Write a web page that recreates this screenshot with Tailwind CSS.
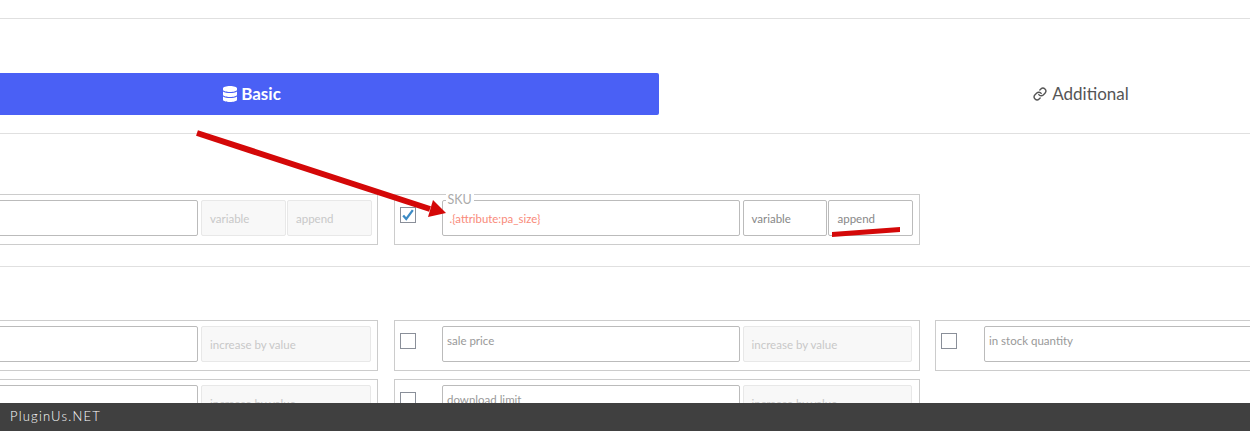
<!DOCTYPE html>
<html lang="en">
<head>
  <meta charset="UTF-8">
  <meta name="viewport" content="width=device-width, initial-scale=1.0">
  <title>Bulk editor</title>
  <script src="https://cdn.jsdelivr.net/npm/@tailwindcss/browser@4"></script>
</head>
<body class="bg-white">
  <div class="relative w-[1250px] h-[431px] overflow-hidden font-['Lato','Liberation_Sans',sans-serif]">
    <div class="pt-[18px]">
      <div class="border-t border-[#e0e0e0] pt-[54px]">
        <!-- tabs -->
        <div class="flex ml-[-155px] w-[1658px] h-[42px] items-center">
          <div class="w-[814px] shrink-0 h-full flex items-center justify-center gap-[4px] bg-[#4a60f5] rounded-r-[2px] text-white text-[17px] font-bold">
            <svg class="w-[14px] h-[16px]" viewBox="0 0 448 512" fill="currentColor"><path d="M448 73.143v45.714C448 159.143 347.667 192 224 192S0 159.143 0 118.857V73.143C0 32.857 100.333 0 224 0s224 32.857 224 73.143zM448 176v102.857C448 319.143 347.667 352 224 352S0 319.143 0 278.857V176c48.125 33.143 136.208 48.572 224 48.572S399.874 209.143 448 176zm0 160v102.857C448 479.143 347.667 512 224 512S0 479.143 0 438.857V336c48.125 33.143 136.208 48.572 224 48.572S399.874 369.143 448 336z"/></svg>
            <span>Basic</span>
          </div>
          <div class="w-[844px] shrink-0 h-full flex items-center justify-center gap-[5px] text-[#555] text-[17px]">
            <svg class="w-[14px] h-[14px]" viewBox="0 0 24 24" fill="none" stroke="currentColor" stroke-width="2.4" stroke-linecap="round" stroke-linejoin="round"><path d="M10 13a5 5 0 0 0 7.54.54l3-3a5 5 0 0 0-7.07-7.07l-1.72 1.71"/><path d="M14 11a5 5 0 0 0-7.54-.54l-3 3a5 5 0 0 0 7.07 7.07l1.71-1.71"/></svg>
            <span>Additional</span>
          </div>
        </div>

        <!-- first section -->
        <div class="mt-[18px] border-t border-[#e0e0e0] pt-[60px] pb-[21px]">
          <div class="ml-[-147px] grid grid-cols-[525px_526px_526px] gap-x-[15.5px]">
            <div class="h-[51px] border border-[#ccc] pt-[5px] pl-[6px] pr-[5px] flex gap-[3px]">
              <div class="flex-1 h-[36px] border border-[#bbb] rounded-[2px]"></div>
              <div class="w-[85px] h-[36px] border border-[#e8e8e8] bg-[#f8f8f8] rounded-[2px] pl-[8px] pt-[1px] flex items-center text-[11.5px] text-[#c8c8c8]">variable</div>
              <div class="w-[85px] h-[36px] -ml-[2px] border border-[#e8e8e8] bg-[#f8f8f8] rounded-[2px] pl-[8px] pt-[1px] flex items-center text-[11.5px] text-[#c8c8c8]">append</div>
            </div>
            <div class="h-[51px] border border-[#ccc] pt-[5px] pr-[6px] flex">
              <div class="w-[16px] h-[16px] ml-[5px] mt-[7px] border border-[#8a8f99] flex items-center justify-center">
                <svg class="w-[14px] h-[14px]" viewBox="0 0 16 16" fill="none" stroke="#3b8ac4" stroke-width="2.6"><path d="M2.5 8.5l3.5 4L13.5 2.5"/></svg>
              </div>
              <div class="relative w-[298px] h-[36px] ml-[26px] border border-[#bbb] rounded-[2px] pl-[7px] pt-[11px] text-[11.4px] leading-[14px] text-[#f98a7a]">
                <span class="absolute left-[3px] top-[-9px] bg-white px-[2px] text-[12.5px] leading-[16px] text-[#aaa]">SKU</span>
                .{attribute:pa_size}
              </div>
              <div class="w-[84px] h-[36px] ml-[3px] border border-[#bbb] rounded-[2px] pl-[8px] pt-[1px] flex items-center text-[11.5px] text-[#888]">variable</div>
              <div class="w-[85px] h-[36px] ml-[1px] border border-[#bbb] rounded-[2px] pl-[9px] pt-[1px] flex items-center text-[11.5px] text-[#888]">append</div>
            </div>
          </div>
        </div>

        <!-- second section -->
        <div class="border-t border-[#e0e0e0] pt-[53px]">
          <div class="ml-[-147px] grid grid-cols-[525px_526px_526px] gap-x-[15.5px] gap-y-[8px]">
            <div class="h-[51px] border border-[#ccc] pt-[5px] pl-[6px] pr-[6px] flex gap-[3px]">
              <div class="flex-1 h-[36px] border border-[#bbb] rounded-[2px]"></div>
              <div class="w-[170px] h-[36px] border border-[#e8e8e8] bg-[#f8f8f8] rounded-[2px] pl-[8px] pt-[1px] flex items-center text-[11.5px] text-[#c8c8c8]">increase by value</div>
            </div>
            <div class="h-[51px] border border-[#ccc] pt-[5px] pr-[7px] flex">
              <div class="w-[16px] h-[16px] ml-[5px] mt-[7px] border border-[#8a8f99]"></div>
              <div class="w-[298px] h-[36px] ml-[26px] border border-[#bbb] rounded-[2px] pl-[4.5px] pt-[7px] text-[11.5px] leading-[14px] text-[#999]">sale price</div>
              <div class="w-[169px] h-[36px] ml-[3px] border border-[#e8e8e8] bg-[#f8f8f8] rounded-[2px] pl-[8px] pt-[1px] flex items-center text-[11.5px] text-[#c8c8c8]">increase by value</div>
            </div>
            <div class="h-[51px] border border-[#ccc] pt-[5px] flex">
              <div class="w-[16px] h-[16px] ml-[5px] mt-[7px] border border-[#8a8f99]"></div>
              <div class="w-[298px] h-[36px] ml-[27px] border border-[#bbb] rounded-[2px] pl-[4px] pt-[7px] text-[11.5px] leading-[14px] text-[#999]">in stock quantity</div>
            </div>
            <div class="h-[51px] border border-[#ccc] pt-[5px] pl-[6px] pr-[6px] flex gap-[3px]">
              <div class="flex-1 h-[36px] border border-[#bbb] rounded-[2px]"></div>
              <div class="w-[170px] h-[36px] border border-[#e8e8e8] bg-[#f8f8f8] rounded-[2px] pl-[8px] pt-[1px] flex items-center text-[11.5px] text-[#c8c8c8]">increase by value</div>
            </div>
            <div class="h-[51px] border border-[#ccc] pt-[5px] pr-[7px] flex">
              <div class="w-[16px] h-[16px] ml-[5px] mt-[7px] border border-[#8a8f99]"></div>
              <div class="w-[298px] h-[36px] ml-[26px] border border-[#bbb] rounded-[2px] pl-[4.5px] pt-[7px] text-[11.5px] leading-[14px] text-[#999]">download limit</div>
              <div class="w-[169px] h-[36px] ml-[3px] border border-[#e8e8e8] bg-[#f8f8f8] rounded-[2px] pl-[8px] pt-[1px] flex items-center text-[11.5px] text-[#c8c8c8]">increase by value</div>
            </div>
          </div>
        </div>
      </div>
    </div>

    <!-- annotation arrows drawn over the screenshot -->
    <svg class="absolute left-0 top-0 w-[1250px] h-[431px] pointer-events-none" viewBox="0 0 1250 431">
      <path d="M197 133 L430 209" stroke="#d40808" stroke-width="6" fill="none"/>
      <polygon points="446,213 433,200 428,217" fill="#d40808"/>
      <polygon points="832,232 900,227 900,232 832,237" fill="#d40808"/>
    </svg>

    <!-- watermark bar -->
    <div class="absolute left-0 right-0 bottom-0 h-[28px] bg-[#404040] pl-[10px] flex items-center text-[13px] font-light tracking-[1.2px] text-white">PluginUs.NET</div>
  </div>
</body>
</html>
